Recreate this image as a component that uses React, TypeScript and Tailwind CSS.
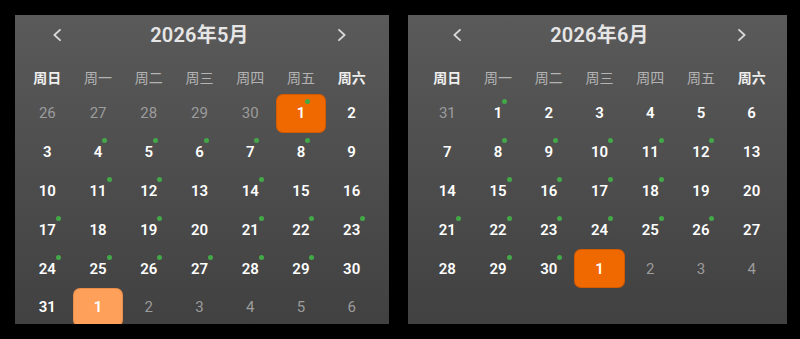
import React from 'react';

type Day = {
  n: number;
  muted?: boolean;
  dot?: boolean;
  selected?: 'strong' | 'soft';
};

const WEEK = ['周日', '周一', '周二', '周三', '周四', '周五', '周六'];

function buildMonth(
  lead: number[],
  total: number,
  tail: number[],
  dots: number[],
  picks: Record<string, 'strong' | 'soft'>
): Day[] {
  const days: Day[] = [];
  lead.forEach((n) => days.push({ n, muted: true }));
  for (let n = 1; n <= total; n++) {
    days.push({ n, dot: dots.includes(n), selected: picks[`c${n}`] });
  }
  tail.forEach((n) => days.push({ n, muted: n !== 1, selected: picks[`t${n}`] }));
  return days;
}

const MAY = buildMonth(
  [26, 27, 28, 29, 30],
  31,
  [1, 2, 3, 4, 5, 6],
  [1, 4, 5, 6, 7, 8, 11, 12, 14, 17, 19, 21, 22, 23, 24, 25, 26, 27, 28, 29],
  { c1: 'strong', t1: 'soft' }
);

const JUNE = buildMonth(
  [31],
  30,
  [1, 2, 3, 4],
  [1, 8, 9, 10, 11, 12, 15, 16, 17, 18, 21, 22, 23, 24, 25, 26, 29, 30],
  { t1: 'strong' }
);

function Chevron({ dir }: { dir: 'left' | 'right' }) {
  return (
    <svg width="8" height="12" viewBox="0 0 8 12" fill="none" className="text-[#d8d8d8]">
      <polyline
        points={dir === 'left' ? '7,0.8 1.4,6 7,11.2' : '1,0.8 6.6,6 1,11.2'}
        stroke="currentColor"
        strokeWidth="1.8"
        strokeLinecap="round"
        strokeLinejoin="round"
      />
    </svg>
  );
}

function DayCell({ day }: { day: Day }) {
  const box =
    day.selected === 'strong'
      ? 'bg-[#f06800] border border-[#c85400]/70'
      : day.selected === 'soft'
        ? 'bg-[#ffa05a] border border-[#d9803f]/60'
        : '';
  const text = day.muted
    ? 'font-normal text-[#9c9c9c]'
    : 'font-semibold text-white';

  return (
    <div className="flex h-[38.8px] items-center justify-center">
      <div className={`flex h-full w-full items-center justify-center rounded-[7px] ${box}`}>
        <span className={`relative text-[15px] leading-[18px] ${text}`}>
          {day.n}
          {day.dot ? (
            <span className="absolute -right-[5px] -top-[5px] h-[5px] w-[5px] rounded-full bg-[#43a848]" />
          ) : null}
        </span>
      </div>
    </div>
  );
}

function MonthPanel({
  title,
  days,
  width,
  inset
}: {
  title: string;
  days: Day[];
  width: string;
  inset: string;
}) {
  return (
    <div className={`h-[309px] shrink-0 overflow-hidden bg-gradient-to-b from-[#5a5a5a] to-[#414141] ${width} ${inset}`}>
      <div className="w-[355px]">
        <div className="flex h-10 items-center justify-between px-[31px]">
          <Chevron dir="left" />
          <span className="text-[20px] font-semibold tracking-[0.2px] text-[#e6e6e6]">{title}</span>
          <Chevron dir="right" />
        </div>
        <div className="grid h-[39px] grid-cols-7 items-center pt-2">
          {WEEK.map((w, i) => (
            <span
              key={w}
              className={`text-center text-[14px] ${
                i === 0 || i === 6 ? 'font-semibold text-[#eeeeee]' : 'font-normal text-[#b3b3b3]'
              }`}
            >
              {w}
            </span>
          ))}
        </div>
        <div className="grid grid-cols-7">
          {days.map((d, i) => (
            <DayCell key={i} day={d} />
          ))}
        </div>
      </div>
    </div>
  );
}

export default function App() {
  return (
    <div className="flex h-[339px] w-[800px] items-start gap-[19px] bg-black p-[15px] font-['Roboto','Noto_Sans_CJK_SC',sans-serif]">
      <MonthPanel title="2026年5月" days={MAY} width="w-[374px]" inset="pl-[7px]" />
      <MonthPanel title="2026年6月" days={JUNE} width="w-[379px]" inset="pl-[14px]" />
    </div>
  );
}
